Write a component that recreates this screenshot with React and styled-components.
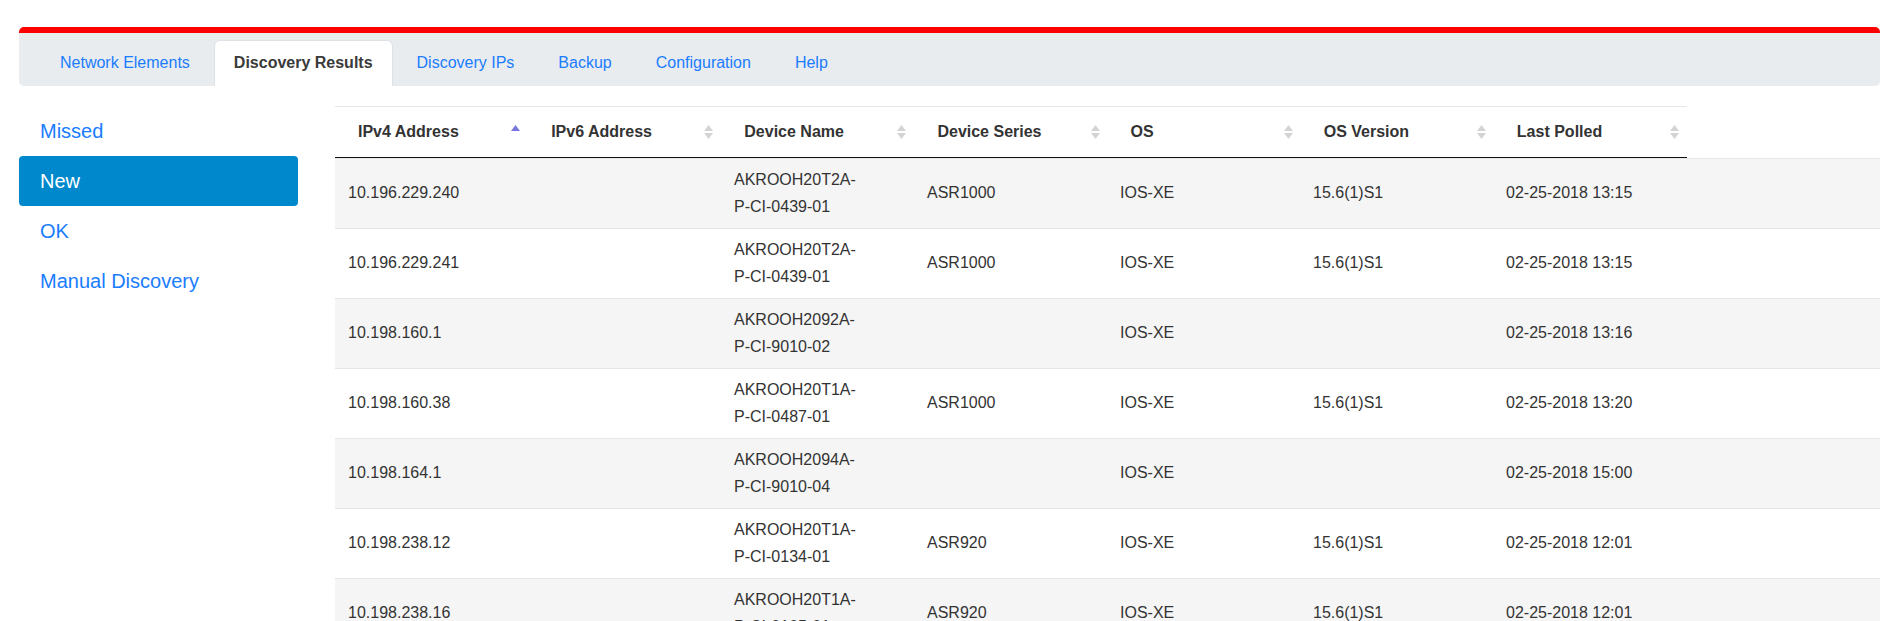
import React from "react";
import styled, { createGlobalStyle, css } from "styled-components";

const GlobalStyle = createGlobalStyle`
  html, body {
    margin: 0;
    padding: 0;
    background: #ffffff;
  }
  body {
    font-family: "Liberation Sans", Arial, Helvetica, sans-serif;
    color: #333333;
  }
  * { box-sizing: border-box; }
`;

const Page = styled.div`
  padding: 27px 18px 0 19px;
`;

const NavCard = styled.nav`
  background: #e9ecef;
  border-top: 6px solid #ff0000;
  border-radius: 5px;
  padding: 7px 21px 0;
`;

const Tabs = styled.ul`
  display: flex;
  gap: 4px;
  list-style: none;
  margin: 0;
  padding: 0;
`;

const Tab = styled.li`
  padding: 10px 19px 11px;
  border: 1px solid transparent;
  border-bottom: none;
  border-radius: 6px 6px 0 0;
  font-size: 16px;
  line-height: 24px;
  color: #1a7cff;
  white-space: nowrap;
  cursor: pointer;
  ${(p) =>
    p.$active &&
    css`
      background: #ffffff;
      border-color: #dee2e6;
      color: #3a3a3a;
      font-weight: 700;
    `}
`;

const Content = styled.div`
  display: grid;
  grid-template-columns: 279px 1fr;
  column-gap: 37px;
  margin-top: 20px;
`;

const Sidebar = styled.ul`
  list-style: none;
  margin: 0;
  padding: 0;
`;

const SideItem = styled.li`
  padding: 10px 21px;
  font-size: 20px;
  line-height: 30px;
  color: #1a7cff;
  border-radius: 4px;
  cursor: pointer;
  ${(p) =>
    p.$active &&
    css`
      background: #0088cc;
      color: #ffffff;
    `}
`;

const TableArea = styled.div`
  min-width: 0;
`;

const HeadRow = styled.div`
  display: grid;
  grid-template-columns: repeat(7, 1fr);
  width: 1352px;
  border-top: 1px solid #e6e6e6;
  border-bottom: 1px solid #111111;
`;

const HeadCell = styled.div`
  display: flex;
  align-items: center;
  justify-content: space-between;
  height: 50px;
  padding: 0 8px 0 23px;
  font-size: 16px;
  font-weight: 700;
  color: #333333;
  white-space: nowrap;
`;

const Body = styled.div`
  border-top: 1px solid #e6e6e6;
`;

const Row = styled.div`
  display: grid;
  grid-template-columns: repeat(6, 193px) 1fr;
  align-items: center;
  border-bottom: 1px solid #e6e6e6;
  background: ${(p) => (p.$striped ? "#f5f5f5" : "#ffffff")};
`;

const Cell = styled.div`
  padding: 8px 13px;
  font-size: 16px;
  line-height: 26.5px;
  color: #333333;
  white-space: nowrap;
`;

const NameLine = styled.span`
  display: block;
`;

const SortIcon = ({ asc }) => (
  <svg width="9" height="16" viewBox="0 0 9 16" aria-hidden="true">
    {asc ? (
      <polygon points="0,7 4.5,1 9,7" fill="#7777dd" />
    ) : (
      <>
        <polygon points="0,7 4.5,1 9,7" fill="#d4d4d4" />
        <polygon points="0,9 4.5,15 9,9" fill="#d4d4d4" />
      </>
    )}
  </svg>
);

const tabs = [
  "Network Elements",
  "Discovery Results",
  "Discovery IPs",
  "Backup",
  "Configuration",
  "Help",
];

const sideItems = ["Missed", "New", "OK", "Manual Discovery"];

const columns = [
  "IPv4 Address",
  "IPv6 Address",
  "Device Name",
  "Device Series",
  "OS",
  "OS Version",
  "Last Polled",
];

const rows = [
  ["10.196.229.240", "", ["AKROOH20T2A-", "P-CI-0439-01"], "ASR1000", "IOS-XE", "15.6(1)S1", "02-25-2018 13:15"],
  ["10.196.229.241", "", ["AKROOH20T2A-", "P-CI-0439-01"], "ASR1000", "IOS-XE", "15.6(1)S1", "02-25-2018 13:15"],
  ["10.198.160.1", "", ["AKROOH2092A-", "P-CI-9010-02"], "", "IOS-XE", "", "02-25-2018 13:16"],
  ["10.198.160.38", "", ["AKROOH20T1A-", "P-CI-0487-01"], "ASR1000", "IOS-XE", "15.6(1)S1", "02-25-2018 13:20"],
  ["10.198.164.1", "", ["AKROOH2094A-", "P-CI-9010-04"], "", "IOS-XE", "", "02-25-2018 15:00"],
  ["10.198.238.12", "", ["AKROOH20T1A-", "P-CI-0134-01"], "ASR920", "IOS-XE", "15.6(1)S1", "02-25-2018 12:01"],
  ["10.198.238.16", "", ["AKROOH20T1A-", "P-CI-0105-01"], "ASR920", "IOS-XE", "15.6(1)S1", "02-25-2018 12:01"],
];

export default function App() {
  return (
    <>
      <GlobalStyle />
      <Page>
        <NavCard>
          <Tabs>
            {tabs.map((t) => (
              <Tab key={t} $active={t === "Discovery Results"}>
                {t}
              </Tab>
            ))}
          </Tabs>
        </NavCard>
        <Content>
          <Sidebar>
            {sideItems.map((s) => (
              <SideItem key={s} $active={s === "New"}>
                {s}
              </SideItem>
            ))}
          </Sidebar>
          <TableArea>
            <HeadRow>
              {columns.map((c, i) => (
                <HeadCell key={c}>
                  <span>{c}</span>
                  <SortIcon asc={i === 0} />
                </HeadCell>
              ))}
            </HeadRow>
            <Body>
              {rows.map((r, ri) => (
                <Row key={ri} $striped={ri % 2 === 0}>
                  {r.map((v, ci) => (
                    <Cell key={ci}>
                      {Array.isArray(v)
                        ? v.map((line) => <NameLine key={line}>{line}</NameLine>)
                        : v}
                    </Cell>
                  ))}
                </Row>
              ))}
            </Body>
          </TableArea>
        </Content>
      </Page>
    </>
  );
}
